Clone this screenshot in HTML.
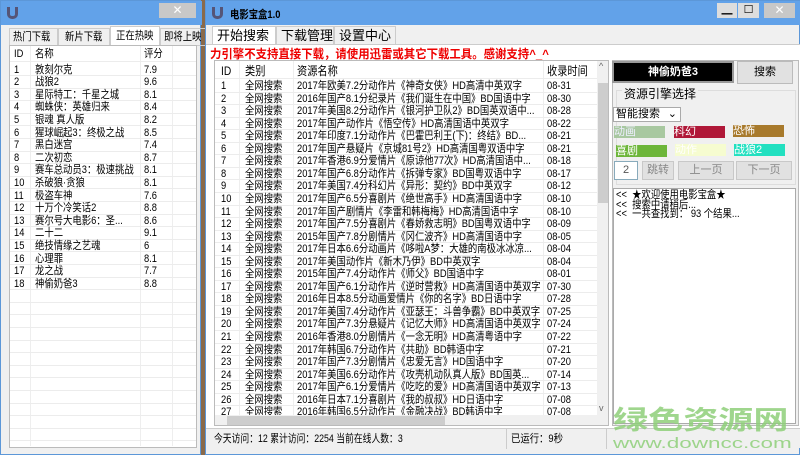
<!DOCTYPE html><html><head><meta charset="utf-8"><style>
*{margin:0;padding:0;box-sizing:border-box}
body{width:800px;height:455px;overflow:hidden;background:#8a6a4a;font-family:"Liberation Sans","Noto Sans CJK SC",sans-serif;font-size:11px;color:#000;position:relative}
.a{position:absolute}
.win{background:#f0f0f0;border:1px solid #5c97d8}
.title{background:#62a2e9;height:24px}
.row{position:absolute;height:12.6px;line-height:12.6px;white-space:nowrap;border-bottom:1px solid #ececec}
.row span{position:absolute;transform:scaleX(.85);transform-origin:0 0}
.s{display:inline-block;transform:scaleX(.85);transform-origin:0 0;white-space:nowrap}
.btn{position:absolute;background:#e1e1e1;border:1px solid #c8c8c8;text-align:center;color:#888}
.tab{position:absolute;border:1px solid #ccc;white-space:nowrap;overflow:hidden}
</style></head><body>
<!-- left window -->
<div class="a win" style="left:0;top:0;width:201px;height:455px">
 <div class="title" style="width:201px"></div>
 <div class="a" style="left:6px;top:6px;width:11px;height:12px;border:3px solid #557;border-top:none;border-radius:0 0 5px 5px"></div>
 <div class="a" style="left:158px;top:2px;width:37px;height:15px;background:#c8c8c8;color:#fff;text-align:center;font-size:12px;line-height:15px">✕</div>
 <div class="a" style="left:8px;top:27px;height:17px;width:189px;line-height:16px">
  <span class="tab" style="left:0;width:49px;padding-left:3px"><span class="s">热门下载</span></span>
  <span class="tab" style="left:49px;width:52px;padding-left:6px"><span class="s">新片下载</span></span>
  <span class="tab" style="left:101px;top:-2px;width:50px;height:19px;border-bottom:none;background:#fff;padding-left:5px;line-height:19px"><span class="s">正在热映</span></span>
  <span class="tab" style="left:151px;width:46px;padding-left:3px"><span class="s">即将上映</span></span>
 </div>
 <div class="a" style="left:8px;top:44px;width:188px;height:403px;background:#fff;border:1px solid #bbb">
  <div class="a" style="left:20px;top:0;width:1px;height:400px;background:#eee"></div>
  <div class="a" style="left:130px;top:0;width:1px;height:400px;background:#eee"></div>
  <div class="a" style="left:162px;top:0;width:1px;height:400px;background:#eee"></div>
  <div class="row" style="top:2px;width:186px;height:14px"><span style="left:4px">ID</span><span style="left:25px">名称</span><span style="left:134px">评分</span></div>
  <div id="lrows"></div>
 </div>
</div>
<!-- right window -->
<div class="a win" style="left:205px;top:0;width:595px;height:455px">
 <div class="title" style="width:595px"></div>
 <div class="a" style="left:6px;top:6px;width:11px;height:12px;border:3px solid #557;border-top:none;border-radius:0 0 5px 5px"></div>
 <div class="a" style="left:24px;top:5px;font-weight:bold;font-size:11px"><span class="s">电影宝盒1.0</span></div>
 <div class="a" style="left:511px;top:2px;width:20px;height:15px;background:#ddd;text-align:center;font-size:11px;line-height:14px">▁</div>
 <div class="a" style="left:532px;top:2px;width:21px;height:15px;background:#ddd;text-align:center;font-size:11px;line-height:14px">☐</div>
 <div class="a" style="left:558px;top:2px;width:31px;height:15px;background:#c8c8c8;color:#fff;text-align:center;font-size:12px;line-height:15px">✕</div>
 <div class="a" style="left:6px;top:25px;height:18px;font-size:13px;line-height:18px">
  <span class="tab" style="left:0;width:64px;border-bottom:none;background:#fff;padding-left:4px">开始搜索</span>
  <span class="tab" style="left:64px;width:58px;padding-left:4px">下载管理</span>
  <span class="tab" style="left:122px;width:62px;padding-left:4px">设置中心</span>
 </div>
 <div class="a" style="left:0;top:43px;width:595px;height:404px;background:#fff;border-top:1px solid #ccc"></div>
 <div class="a" style="left:4px;top:44px;color:#e00;font-weight:bold;font-size:12px;white-space:nowrap"><span class="s" style="transform:scaleX(.95)">力引擎不支持直接下载，请使用迅雷或其它下载工具。感谢支持^_^</span></div>
 <div class="a" style="left:8px;top:59px;width:395px;height:366px;border:1px solid #bbb;background:#fff;overflow:hidden">
  <div class="a" style="left:24px;top:0;width:1px;height:355px;background:#eee"></div>
  <div class="a" style="left:78px;top:0;width:1px;height:355px;background:#eee"></div>
  <div class="a" style="left:328px;top:0;width:1px;height:355px;background:#eee"></div>
  <div class="row" style="top:2px;width:383px;height:16px;line-height:16px;font-size:12px"><span style="left:6px">ID</span><span style="left:30px">类别</span><span style="left:82px">资源名称</span><span style="left:332px">收录时间</span></div>
  <div id="rrows"></div>
  <div class="a" style="left:382px;top:0;width:12px;height:355px;background:#f0f0f0"><div class="a" style="left:1px;top:22px;width:10px;height:120px;background:#cdcdcd"></div><div class="a" style="left:2px;top:0;font-size:9px;color:#666">^</div><div class="a" style="left:2px;top:342px;font-size:9px;color:#666">v</div></div>
  <div class="a" style="left:0;top:354px;width:394px;height:12px;background:#f0f0f0"><div class="a" style="left:12px;top:1px;width:218px;height:10px;background:#cdcdcd"></div></div>
 </div>
 <div class="a" style="left:406px;top:59px;width:187px;height:366px;border:1px solid #bbb;background:#f0f0f0"></div>
 <div class="a" style="left:406px;top:60px;width:122px;height:22px;background:#000;border:2px solid #999;color:#fff;font-weight:bold;text-align:center;line-height:18px;font-size:11px">神偷奶爸3</div>
 <div class="a" style="left:531px;top:60px;width:56px;height:23px;background:#e1e1e1;border:1px solid #bbb;text-align:center;line-height:21px">搜索</div>
 <div class="a" style="left:410px;top:89px;width:180px;height:95px;border:1px solid #ddd"></div>
 <div class="a" style="left:416px;top:84px;background:#f0f0f0;padding:0 2px;font-size:12px">资源引擎选择</div>
 <div class="a" style="left:407px;top:106px;width:68px;height:15px;background:#fff;border:1px solid #aaa;font-size:11px;line-height:13px;padding-left:2px">智能搜索 <span style="position:absolute;right:3px">⌄</span></div>
 <div class="a" style="left:408px;top:125px;width:51px;height:12px;background:#a8c8a0;color:#eef;font-size:11px;line-height:12px">动画</div>
 <div class="a" style="left:468px;top:125px;width:51px;height:12px;background:#b01838;color:#fff;font-size:11px;line-height:12px">科幻</div>
 <div class="a" style="left:527px;top:124px;width:51px;height:12px;background:#a87a2c;color:#fff;font-size:11px;line-height:12px">恐怖</div>
 <div class="a" style="left:410px;top:144px;width:51px;height:12px;background:#6db63a;color:#fff;font-size:11px;line-height:12px">喜剧</div>
 <div class="a" style="left:469px;top:143px;width:51px;height:12px;background:#f6fcd0;color:#fff;font-size:11px;line-height:12px">动作</div>
 <div class="a" style="left:528px;top:143px;width:51px;height:12px;background:#22e0c0;color:#fff;font-size:11px;line-height:12px">战狼2</div>
 <div class="a" style="left:408px;top:160px;width:24px;height:19px;background:#fff;border:1px solid #8ab;text-align:center;line-height:17px;color:#555">2</div>
 <div class="btn" style="left:436px;top:160px;width:32px;height:19px;line-height:17px">跳转</div>
 <div class="btn" style="left:472px;top:160px;width:56px;height:19px;line-height:17px">上一页</div>
 <div class="btn" style="left:530px;top:160px;width:56px;height:19px;line-height:17px">下一页</div>
 <div class="a" style="left:407px;top:187px;width:183px;height:236px;background:#fff;border:1px solid #aaa;font-size:11px;line-height:9.5px;padding:2px 0 0 2px;overflow:hidden"><div class="s" style="white-space:pre">&lt;&lt;  ★欢迎使用电影宝盒★
&lt;&lt;  搜索中请稍后...
&lt;&lt;  一共查找到： 93 个结果...</div></div>
 <div class="a" style="left:0;top:427px;width:595px;height:20px;background:#f0f0f0;border-top:1px solid #ccc;font-size:11px;line-height:20px">
  <span class="a" style="left:8px"><span class="s" style="transform:scaleX(.8)">今天访问：12  累计访问：2254  当前在线人数：3</span></span>
  <span class="a" style="left:300px;height:20px;border-left:1px solid #ccc"></span>
  <span class="a" style="left:305px"><span class="s">已运行：9秒</span></span>
  <span class="a" style="left:400px;height:20px;border-left:1px solid #ccc"></span>
 </div>
 <div class="a" style="left:407px;top:404px;color:#8fd07a;font-size:26px;line-height:30px;font-weight:bold;opacity:.85;white-space:nowrap"><span class="s" style="transform:scaleX(1.35)">绿色资源网</span></div>
 <div class="a" style="left:407px;top:435px;color:#8fd07a;font-size:15px;line-height:16px;opacity:.85;white-space:nowrap"><span class="s" style="transform:scaleX(1.5)">www.downcc.com</span></div>
</div>
<script>
var L=[["1","敦刻尔克","7.9"],["2","战狼2","9.6"],["3","星际特工：千星之城","8.1"],["4","蜘蛛侠：英雄归来","8.4"],["5","银魂 真人版","8.2"],["6","猩球崛起3：终极之战","8.5"],["7","黑白迷宫","7.4"],["8","二次初恋","8.7"],["9","赛车总动员3：极速挑战","8.1"],["10","杀破狼·贪狼","8.1"],["11","极盗车神","7.6"],["12","十万个冷笑话2","8.8"],["13","赛尔号大电影6：圣...","8.6"],["14","二十二","9.1"],["15","绝技情缘之艺魂","6"],["16","心理罪","8.1"],["17","龙之战","7.7"],["18","神偷奶爸3","8.8"]];
var h="";for(var i=0;i<30;i++){var r=L[i]||["","",""];h+='<div class="row" style="top:'+(17.5+i*12.6)+'px;width:186px"><span style="left:4px">'+r[0]+'</span><span style="left:25px">'+r[1]+'</span><span style="left:134px">'+r[2]+'</span></div>';}
document.getElementById("lrows").innerHTML=h;
var R=[["2017年欧美7.2分动作片《神奇女侠》HD高清中英双字","08-31"],["2016年国产8.1分纪录片《我们诞生在中国》BD国语中字","08-30"],["2017年美国8.2分动作片《银河护卫队2》BD国英双语中...","08-28"],["2017年国产动作片《悟空传》HD高清国语中英双字","08-22"],["2017年印度7.1分动作片《巴霍巴利王(下)：终结》BD...","08-21"],["2017年国产悬疑片《京城81号2》HD高清国粤双语中字","08-21"],["2017年香港6.9分爱情片《原谅他77次》HD高清国语中...","08-18"],["2017年国产6.8分动作片《拆弹专家》BD国粤双语中字","08-17"],["2017年美国7.4分科幻片《异形：契约》BD中英双字","08-12"],["2017年国产6.5分喜剧片《绝世高手》HD高清国语中字","08-10"],["2017年国产剧情片《李雷和韩梅梅》HD高清国语中字","08-10"],["2017年国产7.5分喜剧片《春娇救志明》BD国粤双语中字","08-09"],["2015年国产7.8分剧情片《冈仁波齐》HD高清国语中字","08-05"],["2017年日本6.6分动画片《哆啦A梦：大雄的南极冰冰凉...","08-04"],["2017年美国动作片《新木乃伊》BD中英双字","08-04"],["2015年国产7.4分动作片《师父》BD国语中字","08-01"],["2017年国产6.1分动作片《逆时营救》HD高清国语中英双字","07-30"],["2016年日本8.5分动画爱情片《你的名字》BD日语中字","07-28"],["2017年美国7.4分动作片《亚瑟王：斗兽争霸》BD中英双字","07-25"],["2017年国产7.3分悬疑片《记忆大师》HD高清国语中英双字","07-24"],["2016年香港8.0分剧情片《一念无明》HD高清粤语中字","07-22"],["2017年韩国6.7分动作片《共助》BD韩语中字","07-21"],["2017年国产7.3分剧情片《忠爱无言》HD国语中字","07-20"],["2017年美国6.6分动作片《攻壳机动队真人版》BD国英...","07-14"],["2017年国产6.1分爱情片《吃吃的爱》HD高清国语中英双字","07-13"],["2016年日本7.1分喜剧片《我的叔叔》HD日语中字","07-08"],["2016年韩国6.5分动作片《金融决战》BD韩语中字","07-08"]];
h="";for(i=0;i<27;i++){h+='<div class="row" style="top:'+(19+i*12.55)+'px;width:383px"><span style="left:6px">'+(i+1)+'</span><span style="left:30px">全网搜索</span><span style="left:82px">'+R[i][0]+'</span><span style="left:332px">'+R[i][1]+'</span></div>';}
document.getElementById("rrows").innerHTML=h;
</script>
</body></html>
